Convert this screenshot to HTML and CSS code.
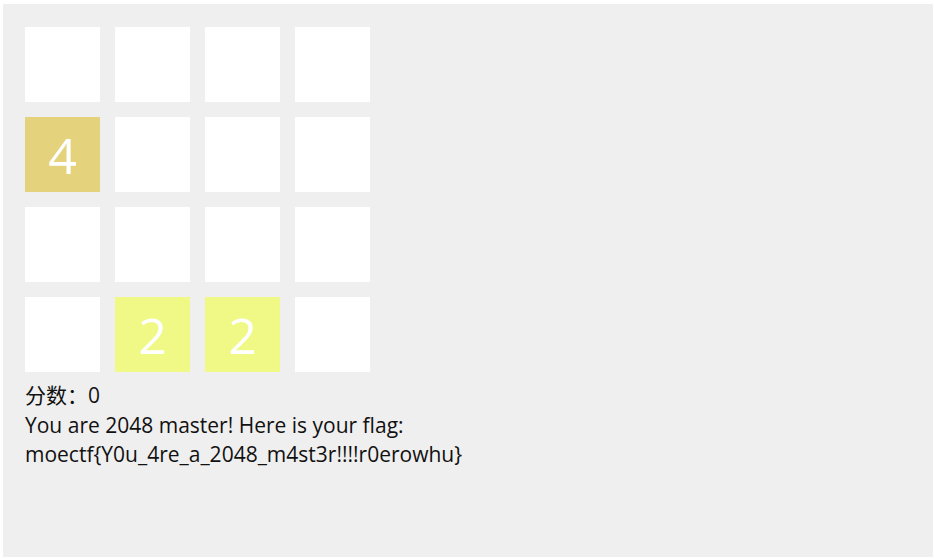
FILE: index.html
```html
<!DOCTYPE html>
<html lang="zh">
<head>
<meta charset="utf-8">
<title>2048</title>
<link rel="stylesheet" href="styles.css">
</head>
<body>
<div class="panel">
  <div class="board">
    <div class="tile"></div>
    <div class="tile"></div>
    <div class="tile"></div>
    <div class="tile"></div>
    <div class="tile t4">4</div>
    <div class="tile"></div>
    <div class="tile"></div>
    <div class="tile"></div>
    <div class="tile"></div>
    <div class="tile"></div>
    <div class="tile"></div>
    <div class="tile"></div>
    <div class="tile"></div>
    <div class="tile t2">2</div>
    <div class="tile t2">2</div>
    <div class="tile"></div>
  </div>
  <div class="info">
    <div class="score">分数：0</div>
    <div class="msg">You are 2048 master! Here is your flag:</div>
    <div class="flag">moectf{Y0u_4re_a_2048_m4st3r!!!!r0erowhu}</div>
  </div>
</div>
</body>
</html>
```

FILE: styles.css
```css
html, body {
  margin: 0;
  background: #ffffff;
}
body {
  padding: 4px 1px 0 3px;
  font-family: "Open Sans", "Noto Sans CJK SC", sans-serif;
}
.panel {
  width: 930px;
  height: 553px;
  background: #efefef;
  box-sizing: border-box;
  padding: 23px 22px 0 22px;
}
.board {
  display: grid;
  grid-template-columns: repeat(4, 75px);
  grid-auto-rows: 75px;
  gap: 15px;
}
.tile {
  background: #ffffff;
  color: #ffffff;
  font-size: 50px;
  display: flex;
  align-items: center;
  justify-content: center;
  line-height: 1;
}
.t4 { background: #e4d37c; }
.t2 { background: #f0f985; }
.info {
  margin-top: 9px;
  font-size: 21px;
  line-height: 29.5px;
  color: #111111;
}
```
